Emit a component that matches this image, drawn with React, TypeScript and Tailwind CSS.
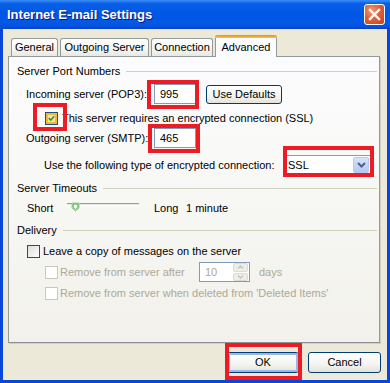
import React from "react";

const FONT = "font-['Liberation_Sans','Arial',sans-serif]";

function CheckBox({ checked = false, disabled = false, hot = false }: { checked?: boolean; disabled?: boolean; hot?: boolean }) {
  if (disabled) {
    return <div className="w-[13px] h-[13px] shrink-0 border border-[#cac8bb] bg-white" />;
  }
  return (
    <div className="w-[13px] h-[13px] shrink-0 border border-[#1c5180] bg-[linear-gradient(135deg,#dcdcd7,#ffffff)] flex items-center justify-center">
      {hot && <div className="absolute" />}
      <div className={hot ? "w-[11px] h-[11px] border-2 border-[#f8b636] bg-[#fbe3a5] flex items-center justify-center" : "w-[11px] h-[11px] flex items-center justify-center"}>
        {checked && (
          <svg width="9" height="9" viewBox="0 0 9 9">
            <path d="M1 4 L3.5 6.5 L8 1.5" fill="none" stroke="#21a121" strokeWidth="2" />
          </svg>
        )}
      </div>
    </div>
  );
}

function XPButton({ label, w, h = 21, focused = false }: { label: string; w: number; h?: number; focused?: boolean }) {
  return (
    <div
      className="rounded-[3px] border border-[#003c74] bg-[linear-gradient(180deg,#ffffff_0%,#f4f4f0_60%,#e3e2da_100%)] flex items-center justify-center text-[11px] text-black"
      style={{ width: w, height: h }}
    >
      <div
        className={
          focused
            ? "w-full h-full rounded-[2px] border-2 border-[#98b8ea] flex items-center justify-center"
            : "w-full h-full flex items-center justify-center"
        }
      >
        {label}
      </div>
    </div>
  );
}

function SectionHeader({ text, mt }: { text: string; mt: string }) {
  return (
    <div className={`flex items-center h-[16px] pl-[8px] pr-[2px] ${mt}`}>
      <span className="text-[11px] text-black whitespace-nowrap">{text}</span>
      <div className="flex-1 h-px bg-[#d0d0bf] ml-[6px]" />
    </div>
  );
}

function Tab({ label, w, selected = false }: { label: string; w: number; selected?: boolean }) {
  if (selected) {
    return (
      <div
        className="relative z-10 self-start h-[22px] border-x border-[#919b9c] bg-[#fcfcfe] rounded-t-[3px] flex flex-col"
        style={{ width: w }}
      >
        <div className="h-[3px] rounded-t-[3px] bg-[linear-gradient(180deg,#e68b2c,#ffc73c)] -mx-px" />
        <div className="flex-1 flex items-start justify-center pt-[1px] text-[11px] text-black">{label}</div>
      </div>
    );
  }
  return (
    <div
      className="h-[18px] border border-b-0 border-[#919b9c] rounded-t-[3px] bg-[linear-gradient(180deg,#ffffff_0%,#f3f3ef_70%,#e8e7e0_100%)] flex items-center justify-center text-[11px] text-black"
      style={{ width: w }}
    >
      {label}
    </div>
  );
}

function RedBox({ l, t, w, h }: { l: number; t: number; w: number; h: number }) {
  return (
    <div
      className="absolute border-[4px] border-[#ed1c24] pointer-events-none z-20"
      style={{ left: l, top: t, width: w, height: h }}
    />
  );
}

export default function App() {
  return (
    <div className={`relative w-[390px] h-[383px] overflow-hidden bg-[#0847d8] flex flex-col ${FONT}`}>
      {/* Title bar */}
      <div className="h-[29px] shrink-0 flex items-center bg-[linear-gradient(180deg,#3d8ef7_0%,#0a61e8_12%,#0056e4_45%,#0059e8_80%,#0a4fd6_92%,#0842c8_100%)]">
        <span className="ml-[7px] text-[13px] font-bold text-white [text-shadow:1px_1px_0_#0a1a7a] whitespace-nowrap">
          Internet E-mail Settings
        </span>
        <div className="ml-auto mr-[5px] w-[21px] h-[21px] rounded-[3px] border border-white bg-[radial-gradient(circle_at_35%_30%,#ef9a7c_0%,#e0603c_45%,#c8401c_100%)] flex items-center justify-center">
          <svg width="13" height="13" viewBox="0 0 13 13">
            <path d="M2 2 L11 11 M11 2 L2 11" stroke="white" strokeWidth="2.4" strokeLinecap="square" />
          </svg>
        </div>
      </div>

      {/* Body */}
      <div className="flex-1 mx-[3px] mb-[3px] bg-[#ece9d8] pt-[6px] flex flex-col">
        {/* Tabs */}
        <div className="h-[21px] flex items-end gap-[2px] pl-[8px]">
          <Tab label="General" w={47} />
          <Tab label="Outgoing Server" w={89} />
          <Tab label="Connection" w={62} />
          <Tab label="Advanced" w={62} selected />
        </div>

        {/* Panel */}
        <div className="ml-[5px] w-[372px] h-[287px] border border-[#919b9c] border-b-[#8c9294] shadow-[1px_1px_0_#d0cfc6] bg-[linear-gradient(180deg,#fcfcfe_0%,#f7f7f4_50%,#f2f1eb_100%)] flex flex-col text-[11px] text-black">
          <SectionHeader text="Server Port Numbers" mt="mt-[6px]" />

          {/* Incoming */}
          <div className="mt-[5px] h-[20px] flex items-center pl-[17px]">
            <span className="w-[128px] whitespace-nowrap">Incoming server (POP3):</span>
            <div className="w-[42px] h-[20px] border border-[#7f9db9] bg-white flex items-center pl-[5px]">995</div>
            <div className="ml-[10px]">
              <XPButton label="Use Defaults" w={76} h={19} />
            </div>
          </div>

          {/* SSL checkbox */}
          <div className="mt-[7px] h-[14px] flex items-center pl-[36px] gap-[4px]">
            <CheckBox checked hot />
            <span className="whitespace-nowrap">This server requires an encrypted connection (SSL)</span>
          </div>

          {/* Outgoing */}
          <div className="mt-[3px] h-[20px] flex items-center pl-[17px]">
            <span className="w-[128px] whitespace-nowrap">Outgoing server (SMTP):</span>
            <div className="w-[42px] h-[20px] border border-[#7f9db9] bg-white flex items-center pl-[5px]">465</div>
          </div>

          {/* Encryption type */}
          <div className="mt-[7px] h-[20px] flex items-center justify-between pl-[35px] pr-[8px]">
            <span className="whitespace-nowrap">Use the following type of encrypted connection:</span>
            <div className="w-[87px] h-[20px] border border-[#7f9db9] bg-white flex items-center pl-[3px] pr-px">
              <span className="flex-1">SSL</span>
              <div className="w-[16px] h-[16px] rounded-[2px] bg-[linear-gradient(180deg,#d6e3fd,#b3c8f5)] border border-[#b7c9ef] flex items-center justify-center">
                <svg width="9" height="6" viewBox="0 0 9 6">
                  <path d="M1 1 L4.5 4.5 L8 1" fill="none" stroke="#4d6185" strokeWidth="2" />
                </svg>
              </div>
            </div>
          </div>

          <SectionHeader text="Server Timeouts" mt="mt-[5px]" />

          {/* Slider row */}
          <div className="mt-[4px] h-[16px] flex items-center pl-[18px]">
            <span className="w-[40px]">Short</span>
            <div className="relative w-[72px] h-[16px]">
              <div className="absolute left-0 right-0 top-[3px] h-[3px] border-t border-[#9d9d9d] border-b border-b-white bg-[#e6e6e0]" />
              <svg className="absolute left-[4px] top-[2px]" width="9" height="10" viewBox="0 0 9 10">
                <path d="M1 1 H8 V6 L4.5 9 L1 6 Z" fill="#f4f4f0" stroke="#b8b8b0" strokeWidth="1" />
                <path d="M2 2 H7 V5.5 L4.5 7.8 L2 5.5 Z" fill="none" stroke="#21c121" strokeWidth="1" />
              </svg>
            </div>
            <span className="ml-[15px] w-[32px]">Long</span>
            <span>1 minute</span>
          </div>

          <SectionHeader text="Delivery" mt="mt-[6px]" />

          <div className="mt-[6px] h-[14px] flex items-center pl-[18px] gap-[3px]">
            <CheckBox />
            <span className="whitespace-nowrap">Leave a copy of messages on the server</span>
          </div>

          <div className="mt-[4px] h-[20px] flex items-center pl-[36px] text-[#aca899]">
            <CheckBox disabled />
            <span className="ml-[2px] w-[139px] whitespace-nowrap">Remove from server after</span>
            <div className="w-[51px] h-[20px] border border-[#7f9db9] bg-white flex items-center">
              <span className="flex-1 pl-[5px] pt-[1px]">10</span>
              <div className="w-[15px] h-[18px] mr-px flex flex-col gap-px">
                <div className="flex-1 rounded-[2px] bg-[#eeeee8] border border-[#dcdcd6] flex items-center justify-center">
                  <svg width="7" height="4" viewBox="0 0 7 4"><path d="M1 3.5 L3.5 1 L6 3.5" fill="none" stroke="#c9c7ba" strokeWidth="1.5" /></svg>
                </div>
                <div className="flex-1 rounded-[2px] bg-[#eeeee8] border border-[#dcdcd6] flex items-center justify-center">
                  <svg width="7" height="4" viewBox="0 0 7 4"><path d="M1 0.5 L3.5 3 L6 0.5" fill="none" stroke="#c9c7ba" strokeWidth="1.5" /></svg>
                </div>
              </div>
            </div>
            <span className="ml-[9px]">days</span>
          </div>

          <div className="mt-[4px] h-[14px] flex items-center pl-[36px] text-[#aca899]">
            <CheckBox disabled />
            <span className="ml-[2px] whitespace-nowrap">Remove from server when deleted from 'Deleted Items'</span>
          </div>
        </div>

        {/* Footer buttons */}
        <div className="mt-[9px] flex justify-end gap-[9px] pr-[6px]">
          <XPButton label="OK" w={72} focused />
          <XPButton label="Cancel" w={73} />
        </div>
      </div>

      {/* Annotation boxes */}
      <RedBox l={147} t={80} w={52} h={29} />
      <RedBox l={33} t={103} w={34} h={28} />
      <RedBox l={148} t={124} w={52} h={29} />
      <RedBox l={283} t={146} w={91} h={31} />
      <RedBox l={225} t={343} w={77} h={37} />
    </div>
  );
}
